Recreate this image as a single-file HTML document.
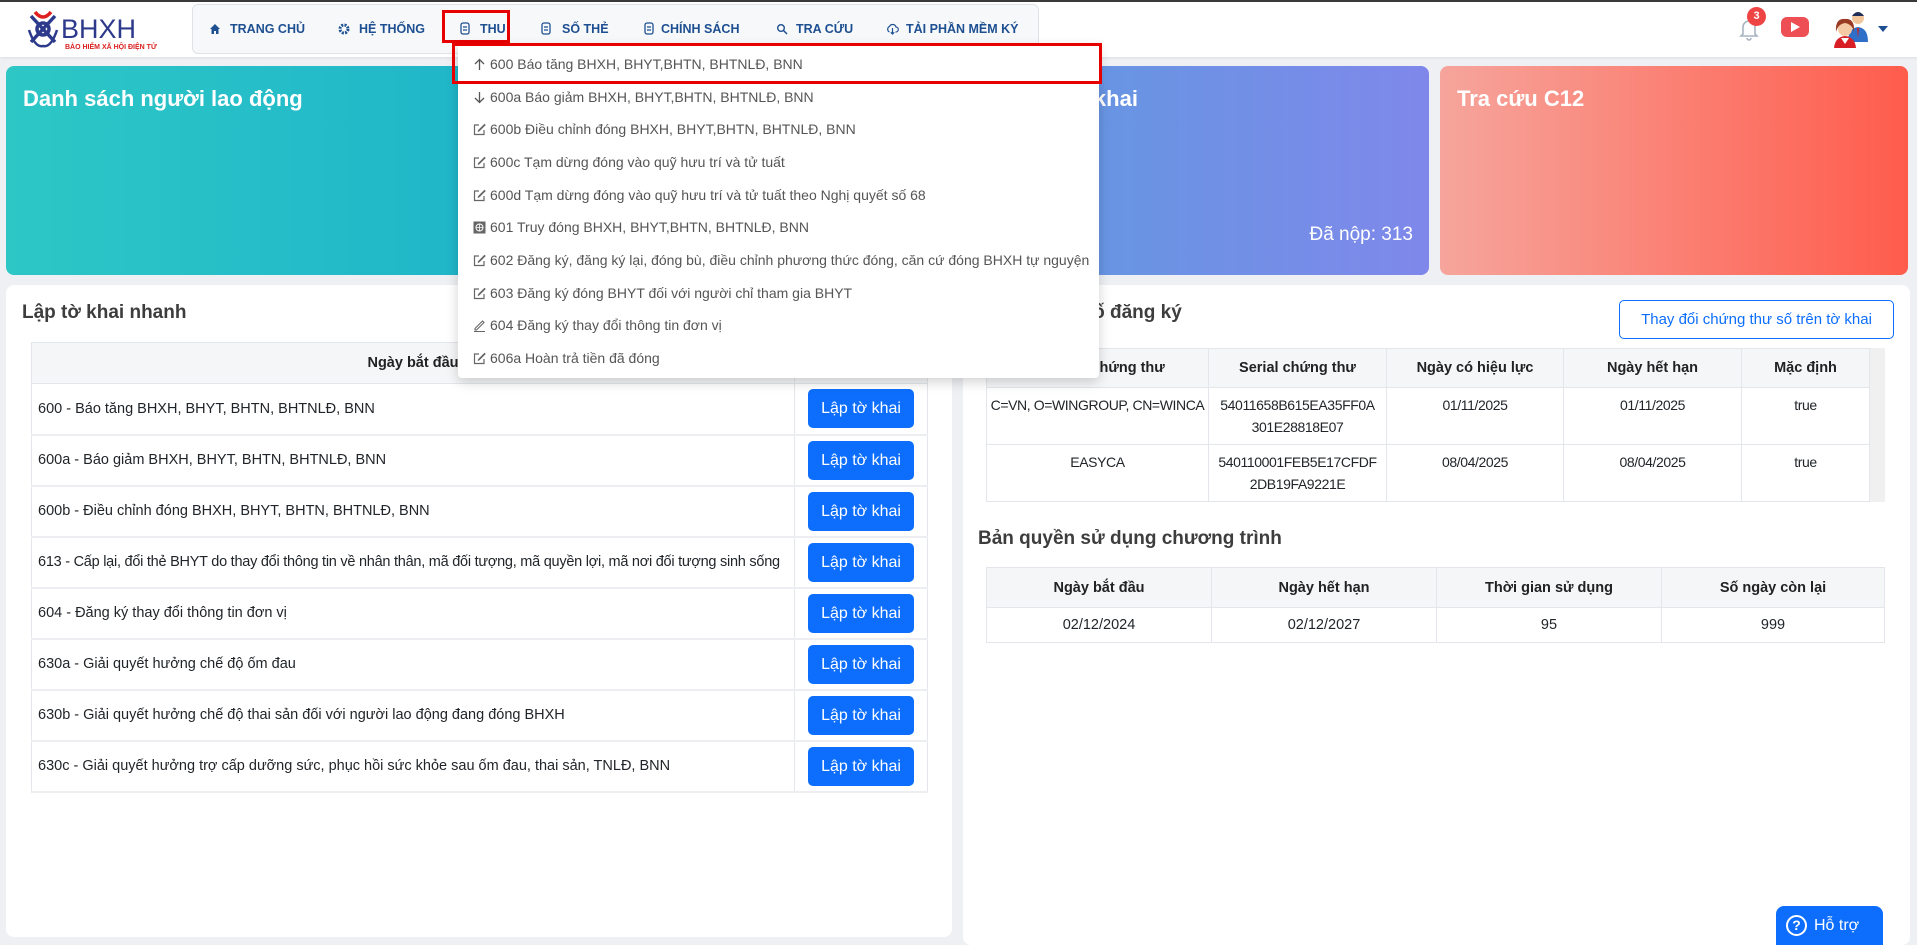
<!DOCTYPE html>
<html><head><meta charset="utf-8"><style>
*{box-sizing:border-box;margin:0;padding:0}
body{width:1917px;height:945px;overflow:hidden;background:#eef0f4;font-family:"Liberation Sans",Roboto,sans-serif;color:#212529;position:relative}
.abs{position:absolute}
.hdr{left:0;top:0;width:1917px;height:57px;background:#fff;border-top:2px solid #3a3a3a;box-shadow:0 1px 3px rgba(0,0,0,.08)}
.nav{left:192px;top:4px;width:847px;height:50px;background:#f7f8fa;border:1px solid #dfe3e8;border-radius:6px}
.ni{position:absolute;top:22px;font-size:12.5px;font-weight:bold;color:#1d4f91;white-space:nowrap}
.card{top:66px;height:209px;width:468px;border-radius:8px;color:#fff}
.card h2{position:absolute;left:17px;top:20px;font-size:22px;font-weight:bold}
.panel{background:#fff;border-radius:8px}
.ttl{font-size:19px;font-weight:bold;color:#3d3d3d}
table{border-collapse:collapse;position:absolute}
td,th{border:1px solid #e3e6ea;font-size:14.5px}
th{background:#f5f6f8;font-weight:bold;color:#222}
.lt td{height:51px;padding:0 6px;border-bottom:2px solid #eceef1}
.ct td{vertical-align:top;padding-top:6px;line-height:22px;font-size:14px;letter-spacing:-0.4px;white-space:nowrap}
.btn{display:inline-block;width:106px;height:39px;line-height:39px;text-align:center;background:#0d6efd;color:#fff;border-radius:5px;font-size:16px}
.dd{left:458px;top:44px;width:641px;height:334px;background:#fff;box-shadow:0 4px 12px rgba(0,0,0,.18);border-radius:0 0 4px 4px}
.di{position:absolute;left:32px;font-size:14px;color:#555;white-space:nowrap}
.dic{position:absolute;left:15px;width:13px;height:13px}
</style></head><body>

<div class="abs hdr"></div>
<svg class="abs" style="left:25px;top:8px" width="145" height="44" viewBox="0 0 145 44">
<g fill="none" stroke-width="3.5">
<path d="M6 8 L30 34 M30 8 L6 34" stroke="#2d3a8c"/>
<path d="M10 4 Q18 14 26 4" stroke="#e02020"/>
<circle cx="18" cy="21" r="6" stroke="#2d3a8c"/>
<path d="M4 22 Q10 40 18 38 Q26 40 32 22" stroke="#2d3a8c" stroke-width="2.5"/>
</g>
<text x="36" y="30" font-family="Liberation Sans" font-size="27" fill="#2d3a8c">BHXH</text>
<text x="40" y="41" font-family="Liberation Sans" font-size="7" font-weight="bold" fill="#d92020">BẢO HIỂM XÃ HỘI ĐIỆN TỬ</text>
</svg>

<div class="abs nav"></div>
<svg class="abs" style="left:209px;top:23px" width="12" height="12" viewBox="0 0 12 12"><path d="M6 1 L11 6 H9.5 V11 H7 V8 H5 V11 H2.5 V6 H1 Z" fill="#1d4f91"/></svg>
<div class="ni" style="left:230px">TRANG CHỦ</div>
<svg class="abs" style="left:338px;top:23px" width="12" height="12" viewBox="0 0 12 12"><circle cx="6" cy="6" r="4" fill="none" stroke="#1d4f91" stroke-width="3" stroke-dasharray="2 1.2"/><circle cx="6" cy="6" r="1.3" fill="#f7f8fa"/></svg>
<div class="ni" style="left:359px">HỆ THỐNG</div>
<svg class="abs" style="left:459px;top:22px" width="12" height="13" viewBox="0 0 12 13"><rect x="2" y="1" width="8" height="11" rx="2" fill="none" stroke="#1d4f91" stroke-width="1.3"/><path d="M4 5H8M4 8H8" stroke="#1d4f91" stroke-width="1.2"/></svg>
<div class="ni" style="left:480px">THU</div>
<div class="abs" style="left:442px;top:10px;width:68px;height:33px;border:3px solid #e60000"></div>
<svg class="abs" style="left:540px;top:22px" width="12" height="13" viewBox="0 0 12 13"><rect x="2" y="1" width="8" height="11" rx="2" fill="none" stroke="#1d4f91" stroke-width="1.3"/><path d="M4 5H8M4 8H8" stroke="#1d4f91" stroke-width="1.2"/></svg>
<div class="ni" style="left:562px">SỐ THẺ</div>
<svg class="abs" style="left:643px;top:22px" width="12" height="13" viewBox="0 0 12 13"><rect x="2" y="1" width="8" height="11" rx="2" fill="none" stroke="#1d4f91" stroke-width="1.3"/><path d="M4 5H8M4 8H8" stroke="#1d4f91" stroke-width="1.2"/></svg>
<div class="ni" style="left:661px">CHÍNH SÁCH</div>
<svg class="abs" style="left:776px;top:23px" width="12" height="12" viewBox="0 0 12 12"><circle cx="5" cy="5" r="3.3" fill="none" stroke="#1d4f91" stroke-width="1.4"/><path d="M7.5 7.5L11 11" stroke="#1d4f91" stroke-width="1.5"/></svg>
<div class="ni" style="left:796px">TRA CỨU</div>
<svg class="abs" style="left:886px;top:23px" width="13" height="12" viewBox="0 0 13 12"><path d="M3.5 9 A3 3 0 0 1 3.5 3.5 A3.5 3.5 0 0 1 10 4 A2.5 2.5 0 0 1 9.5 9" fill="none" stroke="#1d4f91" stroke-width="1.2"/><path d="M6.5 5V11M4.8 9.3L6.5 11L8.2 9.3" fill="none" stroke="#1d4f91" stroke-width="1.2"/></svg>
<div class="ni" style="left:906px">TẢI PHẦN MỀM KÝ</div>

<svg class="abs" style="left:1738px;top:16px" width="22" height="26" viewBox="0 0 22 26"><path d="M5 18 V11 A6 6 0 0 1 17 11 V18 L19 20 H3 Z" fill="none" stroke="#a9b4c2" stroke-width="1.6"/><path d="M9 22 A2 2 0 0 0 13 22" fill="none" stroke="#a9b4c2" stroke-width="1.6"/></svg>
<div class="abs" style="left:1747px;top:7px;width:19px;height:19px;border-radius:50%;background:#ee4444;color:#fff;font-size:11px;font-weight:bold;text-align:center;line-height:19px">3</div>
<div class="abs" style="left:1781px;top:17px;width:28px;height:20px;border-radius:6px;background:#ee4f55"></div>
<svg class="abs" style="left:1791px;top:22px" width="9" height="10"><path d="M0 0L9 5L0 10Z" fill="#fff"/></svg>
<svg class="abs" style="left:1830px;top:8px" width="44" height="44" viewBox="0 0 44 44">
<circle cx="28" cy="10" r="6" fill="#f2c59a"/><path d="M22 8 Q28 0 34 8 Z" fill="#1f2d5a"/>
<path d="M18 34 Q18 20 28 19 Q38 20 38 34 Z" fill="#2f6fc7"/><path d="M27 20 L28 30 L29 20Z" fill="#c22"/>
<circle cx="15" cy="21" r="7" fill="#f5c9a3"/><path d="M6 24 Q5 10 15 11 Q25 10 24 24 Q22 16 15 15 Q8 16 6 24Z" fill="#9a3a22"/>
<path d="M4 40 Q5 29 15 28 Q25 29 26 40 Z" fill="#d81f26"/><path d="M11 30 L15 36 L19 30Z" fill="#fff"/>
</svg>
<svg class="abs" style="left:1878px;top:26px" width="10" height="6"><path d="M0 0H10L5 6Z" fill="#1d4f91"/></svg>

<div class="abs card" style="left:6px;background:linear-gradient(90deg,#2dc7c6,#1fb6c9)"><h2>Danh sách người lao động</h2></div>
<div class="abs card" style="left:483px;background:linear-gradient(90deg,#3fb3d8,#4b9be0)"><h2>Tờ khai chưa nộp</h2></div>
<div class="abs card" style="left:961px;background:linear-gradient(90deg,#5e9ae0,#7f88ea)"><h2>Tra cứu tờ khai</h2><div style="position:absolute;right:16px;top:158px;font-size:19px">Đã nộp: 313</div></div>
<div class="abs card" style="left:1440px;background:linear-gradient(90deg,#f6a59c,#ff5c4c)"><h2>Tra cứu C12</h2></div>

<div class="abs panel" style="left:6px;top:285px;width:946px;height:652px"></div>
<div class="abs ttl" style="left:22px;top:302px">Lập tờ khai nhanh</div>
<table class="lt" style="left:31px;top:342px;width:897px">
<tr><th style="height:41px;width:763px">Ngày bắt đầu</th><th></th></tr>
<tr><td>600 - Báo tăng BHXH, BHYT, BHTN, BHTNLĐ, BNN</td><td style="text-align:center"><span class="btn">Lập tờ khai</span></td></tr>
<tr><td>600a - Báo giảm BHXH, BHYT, BHTN, BHTNLĐ, BNN</td><td style="text-align:center"><span class="btn">Lập tờ khai</span></td></tr>
<tr><td>600b - Điều chỉnh đóng BHXH, BHYT, BHTN, BHTNLĐ, BNN</td><td style="text-align:center"><span class="btn">Lập tờ khai</span></td></tr>
<tr><td style="letter-spacing:-0.25px">613 - Cấp lại, đổi thẻ BHYT do thay đổi thông tin về nhân thân, mã đối tượng, mã quyền lợi, mã nơi đối tượng sinh sống</td><td style="text-align:center"><span class="btn">Lập tờ khai</span></td></tr>
<tr><td>604 - Đăng ký thay đổi thông tin đơn vị</td><td style="text-align:center"><span class="btn">Lập tờ khai</span></td></tr>
<tr><td>630a - Giải quyết hưởng chế độ ốm đau</td><td style="text-align:center"><span class="btn">Lập tờ khai</span></td></tr>
<tr><td>630b - Giải quyết hưởng chế độ thai sản đối với người lao động đang đóng BHXH</td><td style="text-align:center"><span class="btn">Lập tờ khai</span></td></tr>
<tr><td>630c - Giải quyết hưởng trợ cấp dưỡng sức, phục hồi sức khỏe sau ốm đau, thai sản, TNLĐ, BNN</td><td style="text-align:center"><span class="btn">Lập tờ khai</span></td></tr>
</table>

<div class="abs panel" style="left:963px;top:285px;width:947px;height:660px"></div>
<div class="abs ttl" style="left:978px;top:302px">Chứng thư số đăng ký</div>
<div class="abs" style="left:1619px;top:300px;width:275px;height:39px;border:1px solid #0d6efd;border-radius:5px;color:#0d6efd;font-size:15px;text-align:center;line-height:37px">Thay đổi chứng thư số trên tờ khai</div>
<div class="abs" style="left:1870px;top:348px;width:15px;height:154px;background:#f0f0f0"></div>
<table class="ct" style="left:986px;top:348px;width:884px;text-align:center">
<tr style="height:39px"><th style="width:222px">Cấp cho chứng thư</th><th style="width:178px">Serial chứng thư</th><th style="width:177px">Ngày có hiệu lực</th><th style="width:178px">Ngày hết hạn</th><th>Mặc định</th></tr>
<tr style="height:57px"><td>C=VN, O=WINGROUP, CN=WINCA</td><td>54011658B615EA35FF0A<br>301E28818E07</td><td>01/11/2025</td><td>01/11/2025</td><td>true</td></tr>
<tr style="height:57px"><td>EASYCA</td><td>540110001FEB5E17CFDF<br>2DB19FA9221E</td><td>08/04/2025</td><td>08/04/2025</td><td>true</td></tr>
</table>
<div class="abs ttl" style="left:978px;top:528px">Bản quyền sử dụng chương trình</div>
<table style="left:986px;top:567px;width:899px;text-align:center">
<tr style="height:40px"><th style="width:225px">Ngày bắt đầu</th><th style="width:225px">Ngày hết hạn</th><th style="width:225px">Thời gian sử dụng</th><th>Số ngày còn lại</th></tr>
<tr style="height:35px"><td>02/12/2024</td><td>02/12/2027</td><td>95</td><td>999</td></tr>
</table>

<div class="abs" style="left:1776px;top:906px;width:107px;height:39px;background:#0d6efd;border-radius:8px 8px 0 0;color:#fff;font-size:16px;line-height:39px;padding-left:38px">Hỗ trợ</div>
<div class="abs" style="left:1786px;top:915px;width:21px;height:21px;border:2px solid #fff;border-radius:50%;color:#fff;font-size:14px;font-weight:bold;text-align:center;line-height:17px">?</div>

<div class="abs dd">
<svg class="dic" style="top:14px" viewBox="0 0 13 13"><path d="M6.5 12V1.5M2 6L6.5 1.5L11 6" fill="none" stroke="#555" stroke-width="1.3"/></svg>
<div class="di" style="top:12px">600 Báo tăng BHXH, BHYT,BHTN, BHTNLĐ, BNN</div>
<svg class="dic" style="top:47px" viewBox="0 0 13 13"><path d="M6.5 1V11.5M2 7L6.5 11.5L11 7" fill="none" stroke="#555" stroke-width="1.3"/></svg>
<div class="di" style="top:45px">600a Báo giảm BHXH, BHYT,BHTN, BHTNLĐ, BNN</div>
<svg class="dic" style="top:79px" viewBox="0 0 13 13"><path d="M6 2H1.5V11.5H11V7" fill="none" stroke="#666" stroke-width="1.2"/><path d="M11.5 1.5L6 7L5 8.5L6.5 7.5L12 2Z" fill="none" stroke="#666" stroke-width="1.1"/></svg>
<div class="di" style="top:77px">600b Điều chỉnh đóng BHXH, BHYT,BHTN, BHTNLĐ, BNN</div>
<svg class="dic" style="top:112px" viewBox="0 0 13 13"><path d="M6 2H1.5V11.5H11V7" fill="none" stroke="#666" stroke-width="1.2"/><path d="M11.5 1.5L6 7L5 8.5L6.5 7.5L12 2Z" fill="none" stroke="#666" stroke-width="1.1"/></svg>
<div class="di" style="top:110px">600c Tạm dừng đóng vào quỹ hưu trí và tử tuất</div>
<svg class="dic" style="top:145px" viewBox="0 0 13 13"><path d="M6 2H1.5V11.5H11V7" fill="none" stroke="#666" stroke-width="1.2"/><path d="M11.5 1.5L6 7L5 8.5L6.5 7.5L12 2Z" fill="none" stroke="#666" stroke-width="1.1"/></svg>
<div class="di" style="top:143px">600d Tạm dừng đóng vào quỹ hưu trí và tử tuất theo Nghị quyết số 68</div>
<svg class="dic" style="top:177px" viewBox="0 0 13 13"><rect x="0.5" y="0.5" width="12" height="12" fill="#666"/><circle cx="6.5" cy="6.5" r="3.5" fill="none" stroke="#fff" stroke-width="1"/><path d="M3 6.5H10M6.5 3V10" stroke="#fff" stroke-width=".8"/></svg>
<div class="di" style="top:175px">601 Truy đóng BHXH, BHYT,BHTN, BHTNLĐ, BNN</div>
<svg class="dic" style="top:210px" viewBox="0 0 13 13"><path d="M6 2H1.5V11.5H11V7" fill="none" stroke="#666" stroke-width="1.2"/><path d="M11.5 1.5L6 7L5 8.5L6.5 7.5L12 2Z" fill="none" stroke="#666" stroke-width="1.1"/></svg>
<div class="di" style="top:208px">602 Đăng ký, đăng ký lại, đóng bù, điều chỉnh phương thức đóng, căn cứ đóng BHXH tự nguyện</div>
<svg class="dic" style="top:243px" viewBox="0 0 13 13"><path d="M6 2H1.5V11.5H11V7" fill="none" stroke="#666" stroke-width="1.2"/><path d="M11.5 1.5L6 7L5 8.5L6.5 7.5L12 2Z" fill="none" stroke="#666" stroke-width="1.1"/></svg>
<div class="di" style="top:241px">603 Đăng ký đóng BHYT đối với người chỉ tham gia BHYT</div>
<svg class="dic" style="top:275px" viewBox="0 0 13 13"><path d="M2 9.5L9.5 2L11 3.5L3.5 11H2Z M1 12.5H12" fill="none" stroke="#666" stroke-width="1.1"/></svg>
<div class="di" style="top:273px">604 Đăng ký thay đổi thông tin đơn vị</div>
<svg class="dic" style="top:308px" viewBox="0 0 13 13"><path d="M6 2H1.5V11.5H11V7" fill="none" stroke="#666" stroke-width="1.2"/><path d="M11.5 1.5L6 7L5 8.5L6.5 7.5L12 2Z" fill="none" stroke="#666" stroke-width="1.1"/></svg>
<div class="di" style="top:306px">606a Hoàn trả tiền đã đóng</div>
</div>
<div class="abs" style="left:452px;top:43px;width:650px;height:41px;border:3px solid #e60000"></div>

</body></html>
